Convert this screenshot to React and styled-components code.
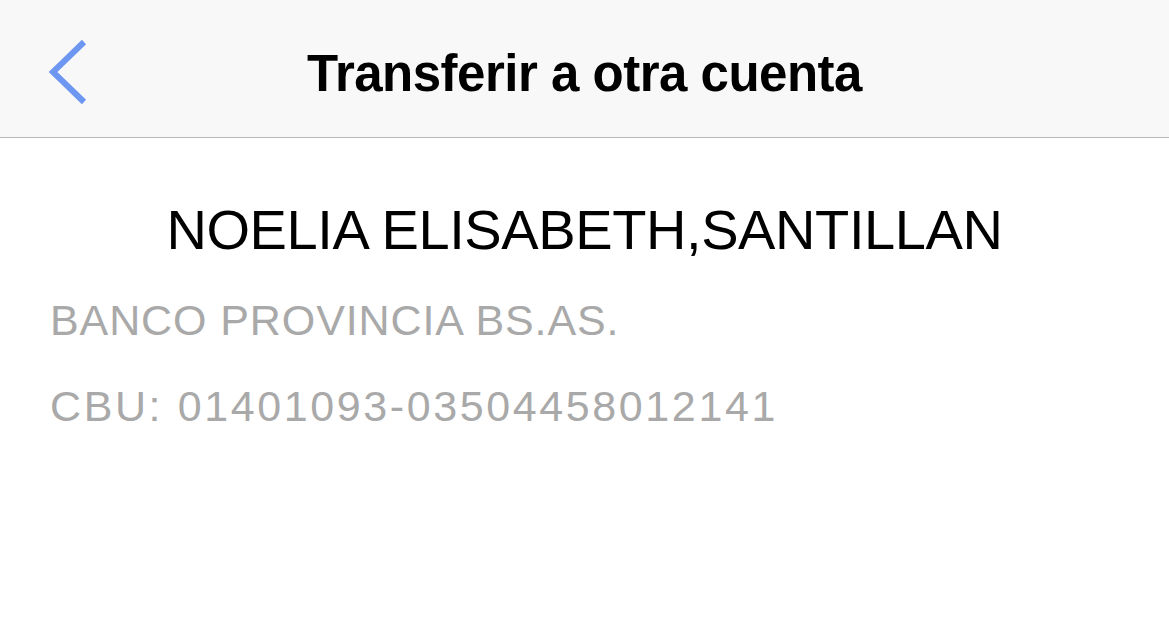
import React from "react";
import styled, { createGlobalStyle } from "styled-components";

const Global = createGlobalStyle`
  html, body { margin: 0; padding: 0; background: #ffffff; }
  body { font-family: "Liberation Sans", Arial, sans-serif; }
`;

const Page = styled.div`
  width: 1169px;
  height: 636px;
  background: #ffffff;
  display: flex;
  flex-direction: column;
  overflow: hidden;
`;

const NavBar = styled.header`
  height: 138px;
  flex: none;
  background: #f8f8f8;
  border-bottom: 1.5px solid #b8b8b8;
  display: grid;
  grid-template-columns: 120px 1fr 120px;
  align-items: center;
  box-sizing: border-box;
`;

const BackButton = styled.button`
  border: none;
  background: none;
  padding: 6px 0 0 46px;
  margin: 0;
  display: flex;
  align-items: center;
  height: 100%;
  cursor: pointer;
`;

const Title = styled.h1`
  margin: 0;
  padding-top: 10px;
  text-align: center;
  font-size: 51px;
  line-height: 1;
  font-weight: 700;
  color: #000;
  letter-spacing: -0.5px;
`;

const Content = styled.main`
  display: flex;
  flex-direction: column;
  padding: 64px 50px 0;
`;

const Name = styled.div`
  text-align: center;
  font-size: 56px;
  color: #000;
  line-height: 1;
  letter-spacing: -0.4px;
  margin-bottom: 41px;
`;

const Detail = styled.div`
  font-size: 43px;
  color: #a9a9a9;
  line-height: 1;
  letter-spacing: ${(p) => p.$spacing || 0}px;
  margin-bottom: ${(p) => p.$gap || 0}px;
`;

export default function App() {
  return (
    <>
      <Global />
      <Page>
        <NavBar>
          <BackButton aria-label="Volver">
            <svg width="44" height="66" viewBox="0 0 44 66">
              <polyline
                points="38,3 7,33 38,63"
                fill="none"
                stroke="#6e97f2"
                strokeWidth="6"
              />
            </svg>
          </BackButton>
          <Title>Transferir a otra cuenta</Title>
          <div />
        </NavBar>
        <Content>
          <Name>NOELIA ELISABETH,SANTILLAN</Name>
          <Detail $gap={43} $spacing={0.9}>BANCO PROVINCIA BS.AS.</Detail>
          <Detail $spacing={2.6}>CBU: 01401093-03504458012141</Detail>
        </Content>
      </Page>
    </>
  );
}
